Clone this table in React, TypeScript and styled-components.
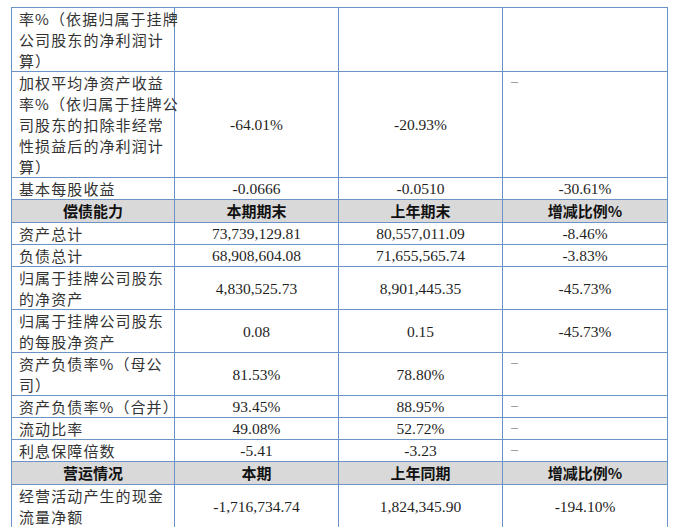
import React from 'react';
import styled, { createGlobalStyle } from 'styled-components';

type Row =
  | { kind: 'head'; cells: string[] }
  | { kind: 'data'; label: string[]; values: string[]; dash?: boolean };

const rows: Row[] = [
  { kind: 'data', label: ['率%（依据归属于挂牌', '公司股东的净利润计', '算）'], values: ['', '', ''] },
  {
    kind: 'data',
    label: ['加权平均净资产收益', '率%（依归属于挂牌公', '司股东的扣除非经常', '性损益后的净利润计', '算）'],
    values: ['-64.01%', '-20.93%', ''],
    dash: true,
  },
  { kind: 'data', label: ['基本每股收益'], values: ['-0.0666', '-0.0510', '-30.61%'] },
  { kind: 'head', cells: ['偿债能力', '本期期末', '上年期末', '增减比例%'] },
  { kind: 'data', label: ['资产总计'], values: ['73,739,129.81', '80,557,011.09', '-8.46%'] },
  { kind: 'data', label: ['负债总计'], values: ['68,908,604.08', '71,655,565.74', '-3.83%'] },
  { kind: 'data', label: ['归属于挂牌公司股东', '的净资产'], values: ['4,830,525.73', '8,901,445.35', '-45.73%'] },
  { kind: 'data', label: ['归属于挂牌公司股东', '的每股净资产'], values: ['0.08', '0.15', '-45.73%'] },
  { kind: 'data', label: ['资产负债率%（母公', '司）'], values: ['81.53%', '78.80%', ''], dash: true },
  { kind: 'data', label: ['资产负债率%（合并）'], values: ['93.45%', '88.95%', ''], dash: true },
  { kind: 'data', label: ['流动比率'], values: ['49.08%', '52.72%', ''], dash: true },
  { kind: 'data', label: ['利息保障倍数'], values: ['-5.41', '-3.23', ''], dash: true },
  { kind: 'head', cells: ['营运情况', '本期', '上年同期', '增减比例%'] },
  {
    kind: 'data',
    label: ['经营活动产生的现金', '流量净额'],
    values: ['-1,716,734.74', '1,824,345.90', '-194.10%'],
  },
];

const GlobalStyle = createGlobalStyle`
  html, body {
    margin: 0;
    padding: 0;
    background: #ffffff;
  }
`;

const Page = styled.div`
  padding: 7px 0 0 11px;
  width: 675px;
  height: 527px;
  box-sizing: border-box;
  overflow: hidden;
`;

const Table = styled.table`
  border-collapse: collapse;
  table-layout: fixed;
  width: 656px;
  color: #1f1f1f;
`;

const Cell = styled.td`
  border: 1px solid #6b93c6;
  padding: 0;
  height: 21px;
  vertical-align: middle;
`;

const LabelCell = styled(Cell)`
  padding-left: 7px;
  font-family: 'Noto Sans CJK SC', sans-serif;
  font-size: 15px;
  letter-spacing: 1.1px;
  line-height: 21px;
  color: #333;
`;

const ValueCell = styled(Cell)`
  text-align: center;
  font-family: 'Liberation Serif', serif;
  font-size: 15.5px;
  line-height: 21px;
`;

const DashCell = styled(Cell)`
  vertical-align: top;
  padding-left: 8px;
  font-family: 'Liberation Serif', serif;
  font-size: 14px;
  line-height: 19px;
  color: #8a8a8a;
`;

const HeadCell = styled(Cell)`
  background: #d9d9d9;
  text-align: center;
  height: 22px;
  font-family: 'Noto Sans CJK SC', sans-serif;
  font-weight: 700;
  font-size: 15px;
  line-height: 22px;
  color: #111;
`;

const Line = styled.div`
  white-space: nowrap;
`;

export default function App() {
  return (
    <Page>
      <GlobalStyle />
      <Table>
        <colgroup>
          <col style={{ width: 163 }} />
          <col style={{ width: 164 }} />
          <col style={{ width: 164 }} />
          <col style={{ width: 165 }} />
        </colgroup>
        <tbody>
          {rows.map((row, i) =>
            row.kind === 'head' ? (
              <tr key={i}>
                {row.cells.map((c) => (
                  <HeadCell key={c}>{c}</HeadCell>
                ))}
              </tr>
            ) : (
              <tr key={i}>
                <LabelCell>
                  {row.label.map((l) => (
                    <Line key={l}>{l}</Line>
                  ))}
                </LabelCell>
                <ValueCell>{row.values[0]}</ValueCell>
                <ValueCell>{row.values[1]}</ValueCell>
                {row.dash ? <DashCell>–</DashCell> : <ValueCell>{row.values[2]}</ValueCell>}
              </tr>
            ),
          )}
        </tbody>
      </Table>
    </Page>
  );
}
